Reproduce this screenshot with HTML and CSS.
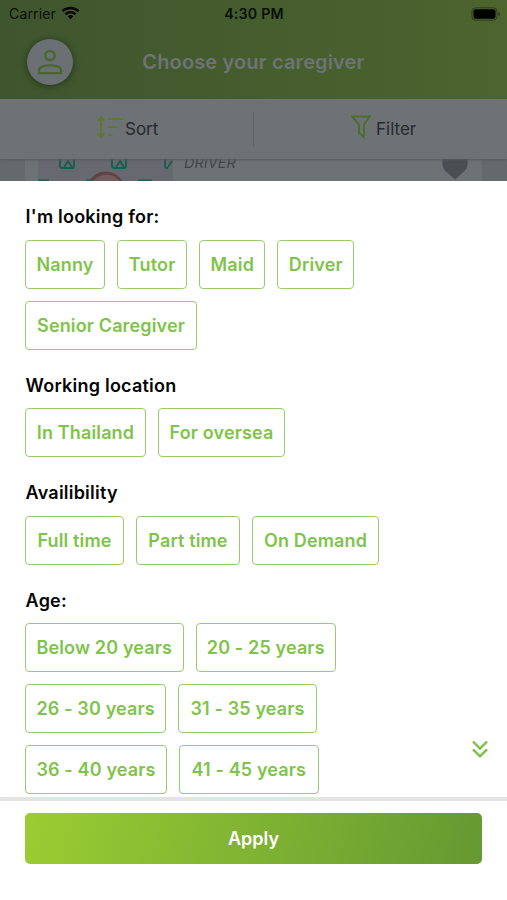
FILE: index.html
```html
<!DOCTYPE html>
<html lang="en">
<head>
<meta charset="utf-8">
<title>Choose your caregiver</title>
<link rel="stylesheet" href="styles.css">
</head>
<body>
<div class="screen">
  <header class="header">
    <div class="status">
      <div class="carrier"><span class="carrier-name">Carrier</span>
        <svg class="wifi" viewBox="0 0 18 14"><g fill="none" stroke="#050803" stroke-width="2.5"><path d="M1 5.1C5.5.8 12.500.8 17 5.100"/><path d="M4 8.300C7 5.500 11 5.500 14 8.300"/></g><path d="M6.200 10.200Q9 8 11.800 10.200L9 13.200Z" fill="#050803"/></svg>
      </div>
      <div class="time">4:30 PM</div>
      <div class="battery"><svg viewBox="0 0 30 14"><rect x="1" y=".8" width="25" height="12.400" rx="3.500" fill="none" stroke="#2f3d20"/><rect x="2.500" y="2.300" width="22" height="9.400" rx="2" fill="#010200"/><path d="M27.500 5v4c2-.7 2-3.300 0-4Z" fill="#293619"/></svg></div>
    </div>
    <div class="titlebar">
      <div class="avatar"><svg viewBox="0 0 28 28" fill="none" stroke="#4b662c" stroke-width="2.300"><circle cx="14" cy="7.500" r="4.700"/><path d="M3 25.200v-3.200c0-6.200 22-6.200 22 0v3.200Z"/></svg></div>
      <h1>Choose your caregiver</h1>
    </div>
  </header>
  <nav class="tools">
    <div class="tool sort">
      <svg viewBox="0 0 26 22" fill="none" stroke="#61762f" stroke-width="2"><path d="M4 2v18M.8 4.700L4 1.500l3.200 3.200M.8 17.300L4 20.500l3.200-3.200M11 3h15M11 11h9.500M11 19h4.500"/></svg>
      <span>Sort</span>
    </div>
    <div class="tool filter">
      <svg viewBox="0 0 20 24" fill="none" stroke="#4d6d2c" stroke-width="2"><path d="M1.200 1.500h17.600L13 9.500V22l-5-4V9.500Z"/></svg>
      <span>Filter</span>
    </div>
  </nav>
  <div class="results">
    <div class="result">
      <svg class="photo" viewBox="0 0 135 23">
        <rect width="135" height="23" fill="#686970"/>
        <g fill="none" stroke="#176050" stroke-width="2"><path d="M22 0v7q0 2 2 2h10q2 0 2-2V0M26 8l4-6 4 6M74 0v7q0 2 2 2h10q2 0 2-2V0M78 8l4-6 4 6M127 0v7q0 2 2 2h1M130 8l4-6"/></g>
        <path d="M23 12h13M75 12h13M128 12h6" stroke="#4b716b" stroke-width="1.200"/>
        <path d="M51 23C58 9 77 9 85 23Z" fill="#5c4447"/><path d="M55 23C60 14 76 13 82 23Z" fill="#745c5e"/>
        <path d="M0 21.500h11M48 21.500h7M100 21.500h14" stroke="#22604c" stroke-width="2"/>
      </svg>
      <span class="role">DRIVER</span>
      <svg class="heart" viewBox="0 0 26 21"><path d="M.500 0h25v6q0 3-3 6L13 20.500 3.500 12Q.500 9 .500 6Z" fill="#4a4d52"/></svg>
    </div>
  </div>

  <main class="sheet">
    <section><h2>I'm looking for:</h2>
      <div class="chips"><button class="w-nanny">Nanny</button><button class="w-tutor">Tutor</button><button class="w-maid">Maid</button><button class="w-driver">Driver</button><button class="w-senior">Senior Caregiver</button></div>
    </section>
    <section><h2>Working location</h2>
      <div class="chips"><button class="w-thai">In Thailand</button><button class="w-oversea">For oversea</button></div>
    </section>
    <section><h2>Availibility</h2>
      <div class="chips"><button class="w-full">Full time</button><button class="w-part">Part time</button><button class="w-demand">On Demand</button></div>
    </section>
    <section><h2>Age:</h2>
      <div class="chips ages"><button class="w-below">Below 20 years</button><button class="w-20">20 - 25 years</button><button class="w-26">26 - 30 years</button><button class="w-31">31 - 35 years</button><button class="w-36">36 - 40 years</button><button class="w-41">41 - 45 years</button></div>
    </section>
    <svg class="more" viewBox="0 0 16 18" fill="none" stroke="#7cc142" stroke-width="2.400"><path d="M1 1.500l7 7 7-7M1 9.300l7 7 7-7"/></svg>
  </main>
  <footer class="footer"><button class="apply">Apply</button></footer>
</div>
</body>
</html>
```

FILE: styles.css
```css
* { box-sizing: border-box; }
body { margin: 0; font-family: Inter, "Liberation Sans", sans-serif; background: #fff; }
button { font: inherit; margin: 0; padding: 0; }
svg { display: block; }

.screen { width: 507px; height: 900px; display: flex; flex-direction: column; overflow: hidden; }

.header { height: 99px; background: linear-gradient(90deg, #3f552e, #4c642e); flex: none; }
.status { height: 28px; display: grid; grid-template-columns: 1fr auto 1fr; align-items: center; padding: 0 6px 0 9px; color: #090f05; font-size: 14px; }
.carrier { display: flex; align-items: center; gap: 5px; margin-top: -1px; }
.carrier-name { letter-spacing: .15px; }
.wifi { width: 19px; height: 14px; margin-top: -2px; }
.time { font-weight: 600; font-size: 14.2px; letter-spacing: .2px; margin: -1px 2px 0 0; }
.battery { justify-self: end; }
.battery svg { width: 30px; height: 14px; margin-top: -1px; }
.titlebar { height: 68px; display: grid; grid-template-columns: 48px 1fr 48px; align-items: center; padding: 0 25px; }
.avatar { width: 46px; height: 46px; margin-left: 2px; border-radius: 50%; background: #6b7074; display: grid; place-items: center; box-shadow: 0 1px 5px 2px rgba(37, 54, 24, .6); }
.avatar svg { width: 28px; height: 28px; }
h1 { margin: 0; text-align: center; font-size: 20px; font-weight: 600; letter-spacing: .13px; color: #6c7477; }

.tools { height: 60px; flex: none; display: grid; grid-template-columns: 254px 253px; background: #6d7275; color: #25292e; font-size: 17px; box-shadow: 0 1px 2px #55595c; position: relative; }
.tool { display: flex; align-items: center; }
.tool span { margin-top: -1px; }
.sort { padding-left: 97px; gap: 2px; background: linear-gradient(#5f6468, #5f6468) right center / 1px 35px no-repeat; }
.sort svg { width: 26px; height: 22px; margin-top: -4px; }
.filter { padding-left: 97px; gap: 5px; }
.filter svg { width: 20px; height: 24px; margin-top: -5px; }

.results { height: 22px; flex: none; background: #64696c; padding: 0 25px; overflow: hidden; }
.result { height: 23px; background: #6d7275; display: flex; padding: 0 14px 0 13px; }
.photo { width: 135px; height: 23px; }
.role { margin-left: 11px; line-height: 18px; margin-top: -5px; font-size: 14.5px; font-style: italic; color: #42464a; flex: 1; }
.heart { width: 26px; height: 21px; }

.sheet { height: 616px; flex: none; background: #fff; padding: 23.200px 25px 0; position: relative; overflow: hidden; }
section { margin-bottom: 23px; }
h2 { margin: 0 0 11.500px .6px; height: 24px; line-height: 26px; font-size: 18px; font-weight: 600; letter-spacing: .22px; color: #050505; white-space: nowrap; }
.chips { display: flex; flex-wrap: wrap; gap: 12.100px 12px; }
.chips button { height: 49px; border: 1.500px solid #98cd6b; border-radius: 4px; background: #fff; color: #7fc44a; font-size: 18px; font-weight: 600; letter-spacing: .14px; white-space: nowrap; }
.ages { width: 340px; }
.w-nanny { width: 80px; }
.w-tutor { width: 70.300px; }
.w-maid { width: 66px; }
.w-driver { width: 77px; }
.w-senior { width: 172px; }
.w-thai { width: 121px; }
.w-oversea { width: 127px; }
.w-full { width: 99px; }
.w-part { width: 104px; }
.w-demand { width: 127px; }
.w-below { width: 158.500px; }
.w-20 { width: 140.500px; }
.w-26 { width: 141.300px; }
.w-31 { width: 138.500px; }
.w-36 { width: 142px; }
.w-41 { width: 139.500px; }
.more { position: absolute; width: 16px; height: 18px; right: 19.500px; bottom: 39.500px; }

.footer { flex: 1; background: #fff; border-top: 4px solid #e4e4e4; padding: 11.500px 25px 0; }
.apply { display: block; width: 100%; height: 51px; border: 0; border-radius: 5px; background: linear-gradient(100deg, #9acd32, #659932); color: #fff; font-size: 18px; font-weight: 600; }
```
